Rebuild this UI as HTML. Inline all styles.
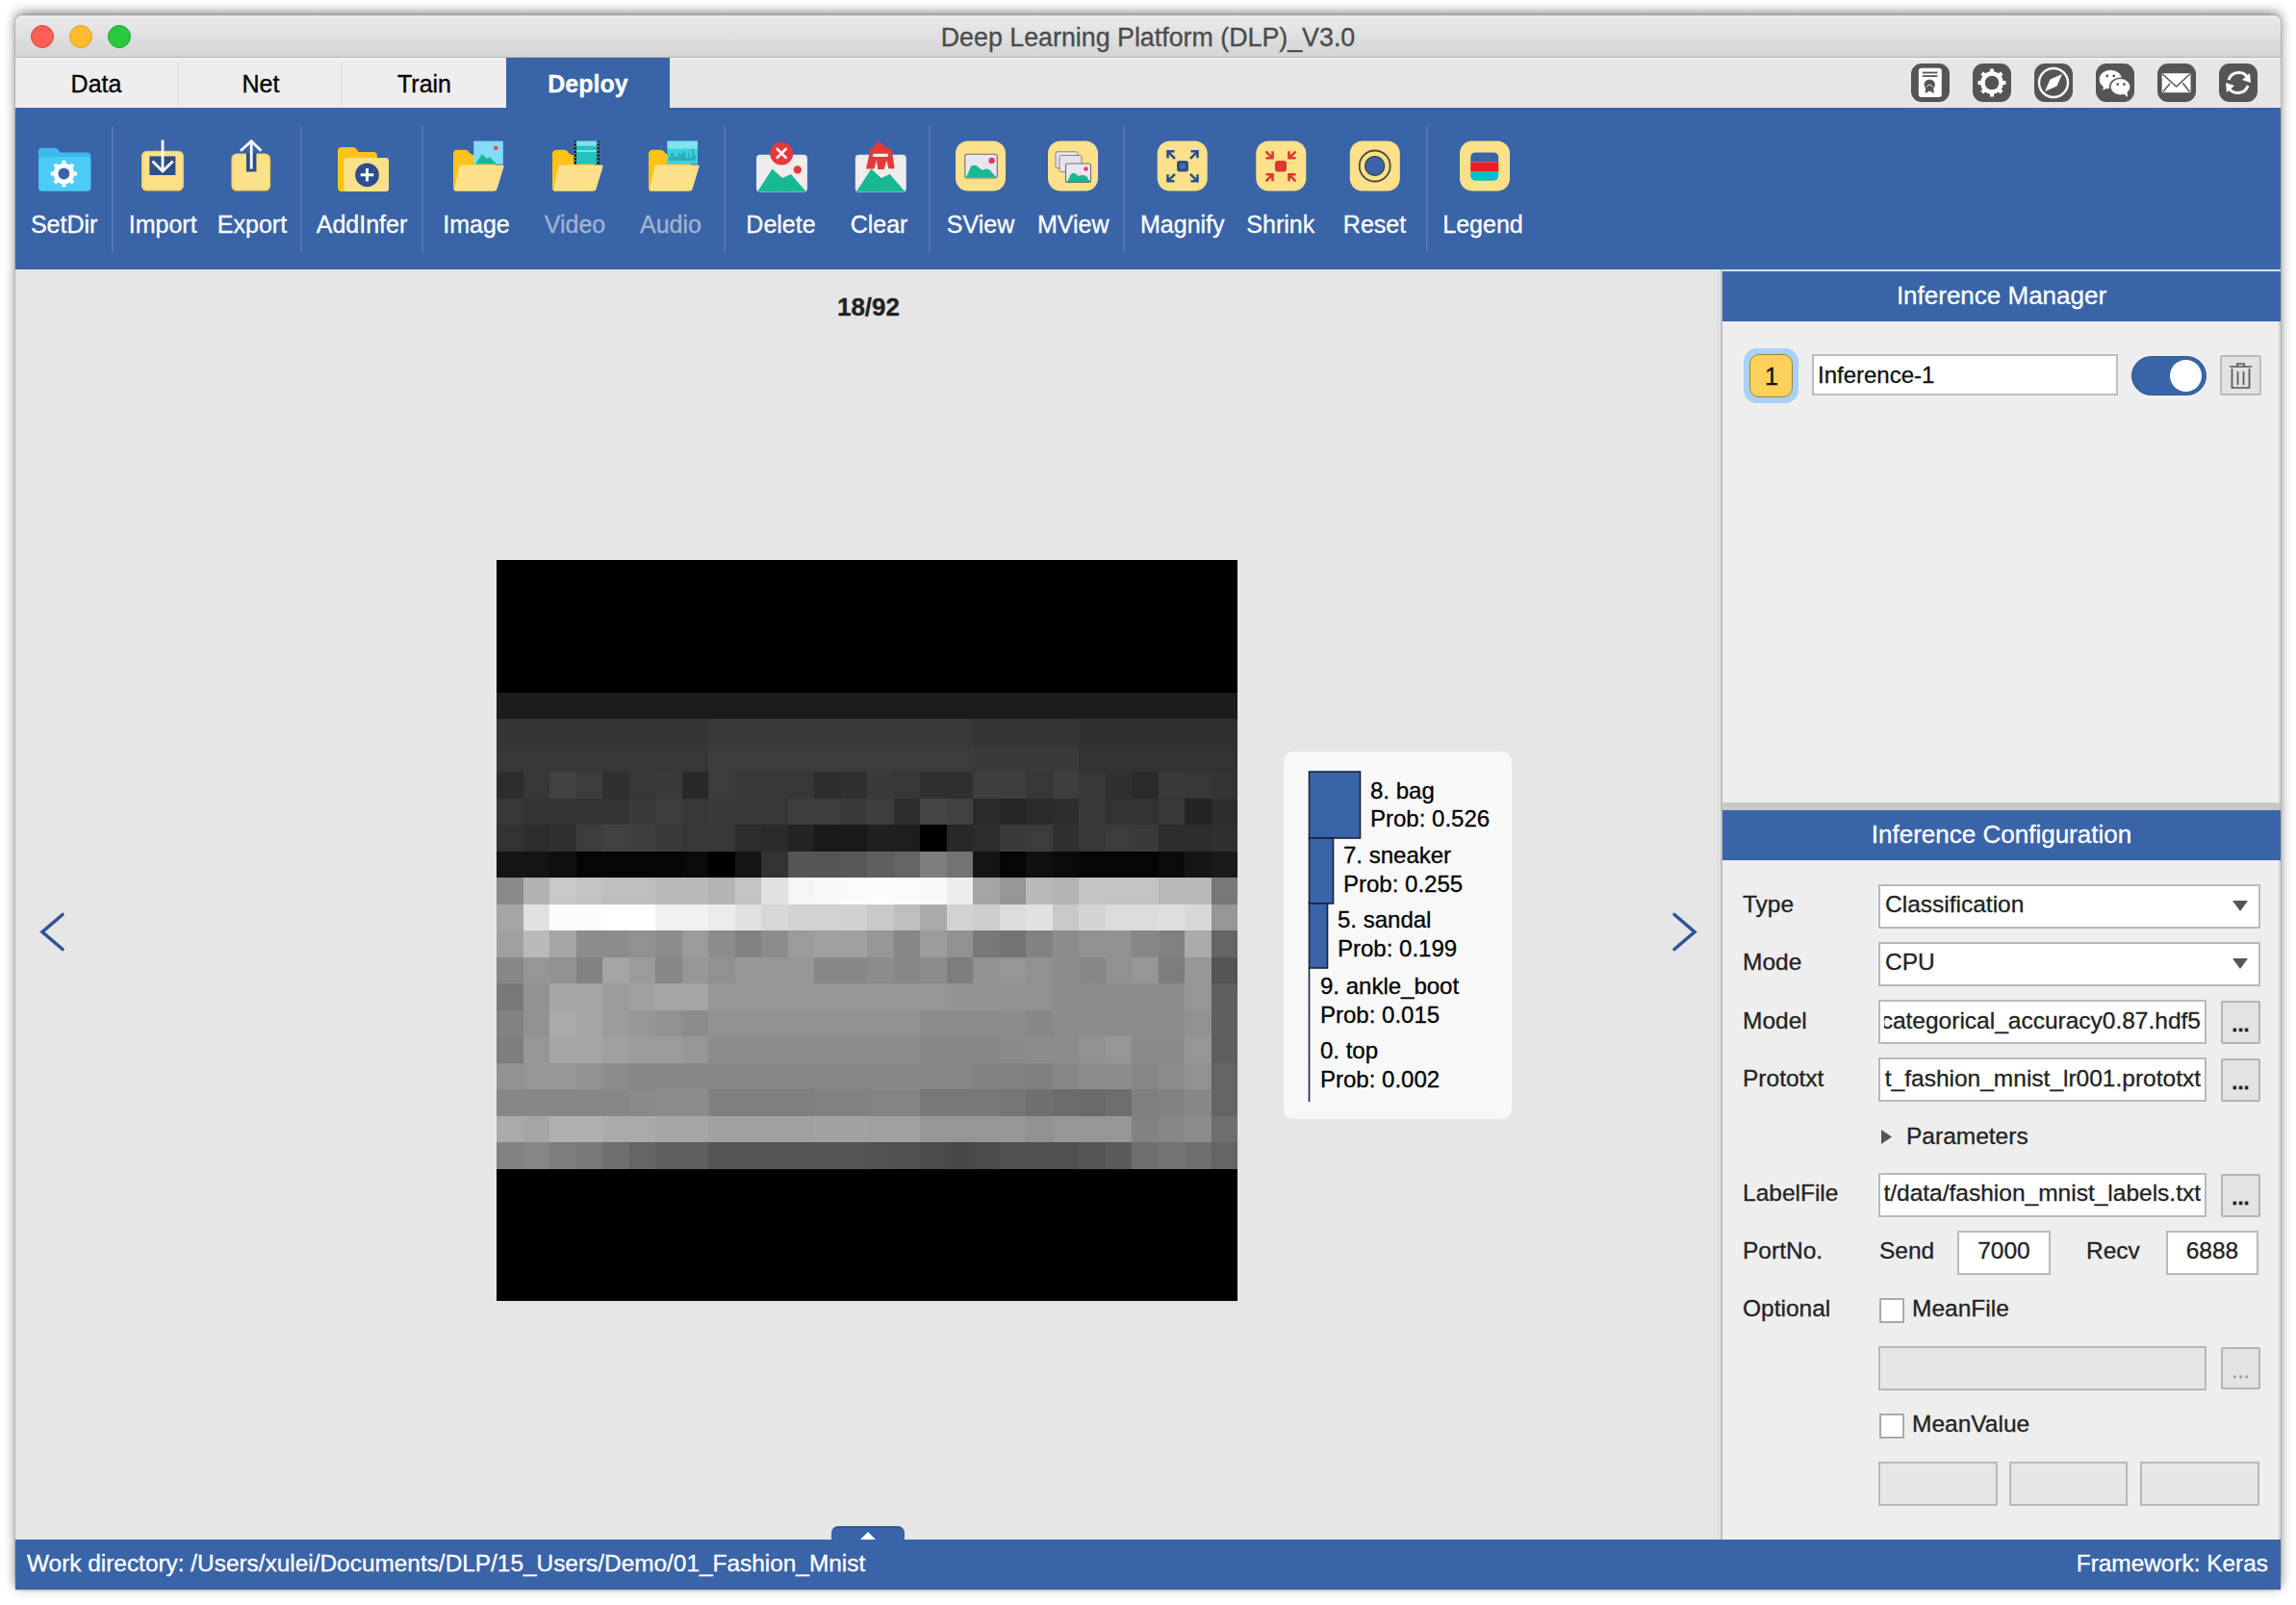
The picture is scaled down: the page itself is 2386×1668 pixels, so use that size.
<!DOCTYPE html><html><head><meta charset="utf-8"><style>
*{margin:0;padding:0;box-sizing:border-box}
html,body{width:2386px;height:1668px;overflow:hidden;background:#ffffff;font-family:"Liberation Sans",sans-serif;position:relative}
.a{position:absolute}
.t{position:absolute;line-height:1;white-space:nowrap;-webkit-text-stroke:0.3px currentColor}
.in{position:absolute;background:#fff;border:2px solid #b9b9b9;overflow:hidden}
.dis{background:#e7e7ea}
.btn{position:absolute;background:#e3e3e3;border:2px solid #b4b4b4;border-radius:2px}
.cb{position:absolute;background:#fff;border:2px solid #a9a9a9;width:26px;height:26px}
</style></head><body><div class="a" style="left:16px;top:16px;width:2354px;height:1636px;background:#e6e6e6;box-shadow:0 -3px 12px rgba(0,0,0,0.5),0 0 2px rgba(0,0,0,0.3);border-radius:7px 7px 0 0"></div><div class="a" style="left:16px;top:16px;width:2354px;height:43px;background:linear-gradient(#ebebeb,#d4d4d4);border-radius:7px 7px 0 0"></div><div class="a" style="left:16px;top:59px;width:2354px;height:1px;background:#b5b5b5"></div><div class="a" style="left:32px;top:26px;width:24px;height:24px;border-radius:50%;background:#fe5f57;border:1px solid #e0443e"></div><div class="a" style="left:72px;top:26px;width:24px;height:24px;border-radius:50%;background:#febc2e;border:1px solid #dea123"></div><div class="a" style="left:112px;top:26px;width:24px;height:24px;border-radius:50%;background:#28c840;border:1px solid #1aab29"></div><div class="t" style="top:26.31px;font-size:26.8px;color:#4b4b4b;font-weight:normal;left:793.00px;width:800px;text-align:center;">Deep Learning Platform (DLP)_V3.0</div><div class="a" style="left:16px;top:60px;width:2354px;height:52px;background:#e6e6e6"></div><div class="a" style="left:16px;top:60px;width:2354px;height:2px;background:#f1f1f1"></div><div class="a" style="left:16px;top:62px;width:510px;height:50px;background:#eeeeee"></div><div class="a" style="left:184px;top:64px;width:2px;height:48px;background:#e3e3e3"></div><div class="a" style="left:354px;top:64px;width:2px;height:48px;background:#e3e3e3"></div><div class="a" style="left:526px;top:60px;width:170px;height:52px;background:#3a64a8"></div><div class="t" style="top:74.84px;font-size:25px;color:#000;font-weight:normal;left:15.00px;width:170px;text-align:center;">Data</div><div class="t" style="top:74.84px;font-size:25px;color:#000;font-weight:normal;left:186.00px;width:170px;text-align:center;">Net</div><div class="t" style="top:74.84px;font-size:25px;color:#000;font-weight:normal;left:356.00px;width:170px;text-align:center;">Train</div><div class="t" style="top:74.84px;font-size:25px;color:#fff;font-weight:bold;left:526.00px;width:170px;text-align:center;">Deploy</div><svg class="a" style="left:0;top:0" width="2386" height="1668"><rect x="1986" y="66" width="40" height="40" rx="11" fill="#555"/><rect x="2050" y="66" width="40" height="40" rx="11" fill="#555"/><rect x="2114" y="66" width="40" height="40" rx="11" fill="#555"/><rect x="2178" y="66" width="40" height="40" rx="11" fill="#555"/><rect x="2242" y="66" width="40" height="40" rx="11" fill="#555"/><rect x="2306" y="66" width="40" height="40" rx="11" fill="#555"/><rect x="1993.8" y="70.7" width="24" height="30.2" rx="3" fill="#fff"/><rect x="1997.8" y="74.6" width="15.6" height="1.8" fill="#555"/><rect x="1997.8" y="78.2" width="15.6" height="1.8" fill="#555"/><path d="M2001.5 90 L2000.5 97 L2005.2 94.5 L2009.9 97 L2008.9 90Z" fill="#555"/><circle cx="2005.2" cy="88" r="5.6" fill="#555"/><path d="M2001.8 90.5 Q2005.2 86 2008.6 90.5" stroke="#fff" stroke-width="0.9" fill="none"/><path d="M2081.41 83.92 L2084.47 84.03 L2084.47 87.97 L2081.41 88.08 L2079.54 92.60 L2081.62 94.84 L2078.84 97.62 L2076.60 95.54 L2072.08 97.41 L2071.97 100.47 L2068.03 100.47 L2067.92 97.41 L2063.40 95.54 L2061.16 97.62 L2058.38 94.84 L2060.46 92.60 L2058.59 88.08 L2055.53 87.97 L2055.53 84.03 L2058.59 83.92 L2060.46 79.40 L2058.38 77.16 L2061.16 74.38 L2063.40 76.46 L2067.92 74.59 L2068.03 71.53 L2071.97 71.53 L2072.08 74.59 L2076.60 76.46 L2078.84 74.38 L2081.62 77.16 L2079.54 79.40Z" fill="#fff"/><circle cx="2070" cy="86" r="11.8" fill="#fff"/><circle cx="2070" cy="86" r="7.3" fill="#555"/><circle cx="2134" cy="86" r="15" fill="none" stroke="#fff" stroke-width="2.4"/><path d="M2125 95 L2130.5 82.5 L2143 77 L2137.5 89.5Z" fill="#fff"/><ellipse cx="2193.3" cy="82.5" rx="11.6" ry="9.8" fill="#fff"/><path d="M2186 88 L2185.5 94 L2191 90.5Z" fill="#fff"/><circle cx="2189.8" cy="78.9" r="1.4" fill="#555"/><circle cx="2196.8" cy="78.9" r="1.4" fill="#555"/><ellipse cx="2203.5" cy="90.3" rx="10.8" ry="9" fill="#fff" stroke="#555" stroke-width="1.6"/><path d="M2207 97.5 L2211 101 L2210.5 95.5Z" fill="#fff"/><circle cx="2200.7" cy="87.6" r="1.4" fill="#555"/><circle cx="2207.4" cy="87.6" r="1.4" fill="#555"/><rect x="2246.7" y="76.2" width="29.8" height="20" fill="#fff"/><path d="M2247 76.8 L2261.6 90 L2276 76.8" fill="none" stroke="#555" stroke-width="1.4"/><path d="M2247.8 95.5 L2255 86.8 M2275.5 95.5 L2268.3 86.3" fill="none" stroke="#555" stroke-width="1.4"/><path d="M2336.5 82 A11 11 0 0 0 2316 83" fill="none" stroke="#fff" stroke-width="3"/><path d="M2315.5 90 A11 11 0 0 0 2336 89" fill="none" stroke="#fff" stroke-width="3"/><path d="M2338 76 L2339 86 L2330 83Z" fill="#fff"/><path d="M2314 96 L2313 86 L2322 89Z" fill="#fff"/></svg><div class="a" style="left:16px;top:112px;width:2354px;height:168px;background:#3a64a8"></div><div class="a" style="left:116px;top:131px;width:2px;height:131px;background:#4f77ba"></div><div class="a" style="left:312px;top:131px;width:2px;height:131px;background:#4f77ba"></div><div class="a" style="left:438px;top:131px;width:2px;height:131px;background:#4f77ba"></div><div class="a" style="left:752px;top:131px;width:2px;height:131px;background:#4f77ba"></div><div class="a" style="left:965px;top:131px;width:2px;height:131px;background:#4f77ba"></div><div class="a" style="left:1167px;top:131px;width:2px;height:131px;background:#4f77ba"></div><div class="a" style="left:1482px;top:131px;width:2px;height:131px;background:#4f77ba"></div><div class="t" style="top:220.84px;font-size:25px;color:#ffffff;font-weight:normal;left:-13.40px;width:160px;text-align:center;">SetDir</div><div class="t" style="top:220.84px;font-size:25px;color:#ffffff;font-weight:normal;left:89.20px;width:160px;text-align:center;">Import</div><div class="t" style="top:220.84px;font-size:25px;color:#ffffff;font-weight:normal;left:182.00px;width:160px;text-align:center;">Export</div><div class="t" style="top:220.84px;font-size:25px;color:#ffffff;font-weight:normal;left:296.00px;width:160px;text-align:center;">AddInfer</div><div class="t" style="top:220.84px;font-size:25px;color:#ffffff;font-weight:normal;left:415.00px;width:160px;text-align:center;">Image</div><div class="t" style="top:220.84px;font-size:25px;color:#a2b4d2;font-weight:normal;left:517.50px;width:160px;text-align:center;">Video</div><div class="t" style="top:220.84px;font-size:25px;color:#a2b4d2;font-weight:normal;left:617.00px;width:160px;text-align:center;">Audio</div><div class="t" style="top:220.84px;font-size:25px;color:#ffffff;font-weight:normal;left:731.50px;width:160px;text-align:center;">Delete</div><div class="t" style="top:220.84px;font-size:25px;color:#ffffff;font-weight:normal;left:833.50px;width:160px;text-align:center;">Clear</div><div class="t" style="top:220.84px;font-size:25px;color:#ffffff;font-weight:normal;left:939.00px;width:160px;text-align:center;">SView</div><div class="t" style="top:220.84px;font-size:25px;color:#ffffff;font-weight:normal;left:1035.20px;width:160px;text-align:center;">MView</div><div class="t" style="top:220.84px;font-size:25px;color:#ffffff;font-weight:normal;left:1148.80px;width:160px;text-align:center;">Magnify</div><div class="t" style="top:220.84px;font-size:25px;color:#ffffff;font-weight:normal;left:1250.80px;width:160px;text-align:center;">Shrink</div><div class="t" style="top:220.84px;font-size:25px;color:#ffffff;font-weight:normal;left:1348.50px;width:160px;text-align:center;">Reset</div><div class="t" style="top:220.84px;font-size:25px;color:#ffffff;font-weight:normal;left:1461.00px;width:160px;text-align:center;">Legend</div><svg class="a" style="left:0;top:0" width="2386" height="1668"><path d="M40 157 Q40 153.8 43.5 153.8 L57 153.8 Q59.5 153.8 61 156 L62.5 158.5 L90.5 158.5 Q94.3 158.5 94.3 162 L94.3 195 Q94.3 198.5 90.5 198.5 L43.5 198.5 Q40 198.5 40 195Z" fill="#3eb8ec"/><rect x="40" y="163" width="54.3" height="35.5" rx="3.5" fill="#4ccbf5"/><path d="M76.81 178.50 L80.06 178.54 L80.06 182.46 L76.81 182.50 L75.18 186.44 L77.44 188.77 L74.67 191.54 L72.34 189.28 L68.40 190.91 L68.36 194.16 L64.44 194.16 L64.40 190.91 L60.46 189.28 L58.13 191.54 L55.36 188.77 L57.62 186.44 L55.99 182.50 L52.74 182.46 L52.74 178.54 L55.99 178.50 L57.62 174.56 L55.36 172.23 L58.13 169.46 L60.46 171.72 L64.40 170.09 L64.44 166.84 L68.36 166.84 L68.40 170.09 L72.34 171.72 L74.67 169.46 L77.44 172.23 L75.18 174.56Z" fill="#fff"/><circle cx="66.4" cy="180.5" r="10.8" fill="#fff"/><circle cx="66.4" cy="180.5" r="5.9" fill="#3a64a8"/><rect x="147.6" y="157.3" width="42.7" height="40.7" rx="5" fill="#fde08a" stroke="#f6cf55" stroke-width="1.2"/><rect x="155.4" y="162.4" width="27" height="19.6" fill="#2c4f8c"/><path d="M169 145.6 L169 177.5 M158.5 167.5 L169 178 L179.7 167.5" fill="none" stroke="#fff" stroke-width="2.8"/><rect x="241" y="160" width="39.5" height="38" rx="5" fill="#fde08a" stroke="#f6cf55" stroke-width="1.2"/><rect x="256" y="159" width="10.4" height="19.5" fill="#2c4f8c"/><path d="M261.2 147 L261.2 175.6 M250 156.8 L261.2 146.6 L271.4 156.8" fill="none" stroke="#fff" stroke-width="2.8"/><path d="M351 157 Q351 153 355 153 L367 153 Q369.5 153 371 155.5 L372.5 158 L388 158 Q392 158 392 162 L392 195 Q392 199 388 199 L355 199 Q351 199 351 195Z" fill="#ffc21a"/><path d="M357.5 167 Q357.5 164 360.5 164 L401 164 Q404 164 404 167 L404 196 Q404 199 401 199 L360.5 199 Q357.5 199 357.5 196Z" fill="#fde08a"/><circle cx="381.5" cy="181.8" r="12.4" fill="#2c4f8c"/><path d="M381.5 175 L381.5 188.6 M374.7 181.8 L388.3 181.8" stroke="#fff" stroke-width="3"/><path d="M471 160 Q471 155.7 476 155.7 L483 155.7 Q486 155.7 488 159 L491 161 L512 161 Q515 161 515 164 L515 196 Q515 198.4 512 198.4 L474 198.4 Q471 198.4 471 195Z" fill="#ffc21a"/><rect x="492.3" y="146.6" width="30.5" height="24" fill="#82dcf7"/><path d="M494 170.4 L501 160 L506 165 L509 163 L516 170.4Z" fill="#17b892"/><circle cx="515.3" cy="153.8" r="2.4" fill="#e05050"/><path d="M479 171.6 L522.5 171.6 Q524 171.6 523.5 173.5 L516.5 196.5 Q516 198.4 514 198.4 L473 198.4 Q471.5 198.4 472 196.5 L477.5 173 Q478 171.6 479 171.6Z" fill="#fde08a"/><path d="M574 160 Q574 155.7 579 155.7 L586 155.7 Q589 155.7 591 159 L594 161 L615 161 Q618 161 618 164 L618 196 Q618 198.4 615 198.4 L577 198.4 Q574 198.4 574 195Z" fill="#ffc21a"/><rect x="596.6" y="146.6" width="26.2" height="24" fill="#22c4bd"/><rect x="599" y="146.6" width="21.4" height="5" fill="#7ee0ee"/><rect x="599" y="156" width="21.4" height="2" fill="#7ee0ee"/><rect x="596.6" y="146.6" width="2.4" height="24" fill="#111"/><rect x="620.4" y="146.6" width="2.4" height="24" fill="#111"/><rect x="597.3" y="148.0" width="1" height="1.3" fill="#fff"/><rect x="621.1" y="148.0" width="1" height="1.3" fill="#fff"/><rect x="597.3" y="151.7" width="1" height="1.3" fill="#fff"/><rect x="621.1" y="151.7" width="1" height="1.3" fill="#fff"/><rect x="597.3" y="155.4" width="1" height="1.3" fill="#fff"/><rect x="621.1" y="155.4" width="1" height="1.3" fill="#fff"/><rect x="597.3" y="159.1" width="1" height="1.3" fill="#fff"/><rect x="621.1" y="159.1" width="1" height="1.3" fill="#fff"/><rect x="597.3" y="162.8" width="1" height="1.3" fill="#fff"/><rect x="621.1" y="162.8" width="1" height="1.3" fill="#fff"/><rect x="597.3" y="166.5" width="1" height="1.3" fill="#fff"/><rect x="621.1" y="166.5" width="1" height="1.3" fill="#fff"/><path d="M582 171.6 L625.5 171.6 Q627 171.6 626.5 173.5 L619.5 196.5 Q619 198.4 617 198.4 L576 198.4 Q574.5 198.4 575 196.5 L580.5 173 Q581 171.6 582 171.6Z" fill="#fde08a"/><path d="M674 160 Q674 155.7 679 155.7 L686 155.7 Q689 155.7 691 159 L694 161 L715 161 Q718 161 718 164 L718 196 Q718 198.4 715 198.4 L677 198.4 Q674 198.4 674 195Z" fill="#ffc21a"/><rect x="693.5" y="146.6" width="31.5" height="24" fill="#3cd0e0"/><rect x="693.5" y="146.6" width="31.5" height="8" fill="#7fe3f2"/><rect x="695.5" y="163" width="0.8" height="4" fill="#1b7f86"/><rect x="697.5" y="159" width="0.8" height="8" fill="#1b7f86"/><rect x="699.5" y="159" width="0.8" height="8" fill="#1b7f86"/><rect x="701.5" y="163" width="0.8" height="4" fill="#1b7f86"/><rect x="703.5" y="162" width="0.8" height="5" fill="#1b7f86"/><rect x="705.5" y="159" width="0.8" height="8" fill="#1b7f86"/><rect x="707.5" y="161" width="0.8" height="6" fill="#1b7f86"/><rect x="709.5" y="157" width="0.8" height="10" fill="#1b7f86"/><rect x="711.5" y="159" width="0.8" height="8" fill="#1b7f86"/><rect x="713.5" y="164" width="0.8" height="3" fill="#1b7f86"/><rect x="715.5" y="159" width="0.8" height="8" fill="#1b7f86"/><rect x="717.5" y="164" width="0.8" height="3" fill="#1b7f86"/><rect x="719.5" y="155" width="0.8" height="12" fill="#1b7f86"/><rect x="721.5" y="161" width="0.8" height="6" fill="#1b7f86"/><path d="M682 171.6 L725.5 171.6 Q727 171.6 726.5 173.5 L719.5 196.5 Q719 198.4 717 198.4 L676 198.4 Q674.5 198.4 675 196.5 L680.5 173 Q681 171.6 682 171.6Z" fill="#fde08a"/><rect x="786" y="160.7" width="53" height="39" rx="4" fill="#e9e9f2"/><rect x="789" y="163.7" width="47" height="33" rx="2" fill="#f2ecec"/><path d="M787 199.6 L802.5 175.5 L813 185 L822 181 L838 199.6Z" fill="#17b892"/><circle cx="828.8" cy="176.4" r="4.2" fill="#e5393b"/><circle cx="812.2" cy="159.4" r="12" fill="#e5393b"/><path d="M807 154.2 L817.4 164.6 M817.4 154.2 L807 164.6" stroke="#fff" stroke-width="2.6"/><rect x="888.8" y="160.7" width="53" height="39" rx="4" fill="#e9e9f2"/><rect x="891.8" y="163.7" width="47" height="33" rx="2" fill="#f2ecec"/><path d="M889.8 199.6 L905.3 175.5 L915.8 185 L924.8 181 L940.8 199.6Z" fill="#17b892"/><path d="M913.4 146.5 L919.5 152.5 Q926.5 153.5 927.5 159.5 L929.5 175.2 L923.5 175.2 L921.2 166.5 L918.8 176 L912.3 176 L910.8 166.5 L908.5 175.5 L900 175.5 L903.5 159.5 Q904.5 153.5 907.5 152.5Z" fill="#e5393b"/><rect x="907" y="159.8" width="16" height="3.2" rx="1.5" fill="#f8eeee"/><rect x="993" y="146.5" width="52" height="52" rx="13" fill="#fde08a"/><rect x="1089" y="146.5" width="52" height="52" rx="13" fill="#fde08a"/><rect x="1202.7" y="146.5" width="52" height="52" rx="13" fill="#fde08a"/><rect x="1305.3" y="146.5" width="52" height="52" rx="13" fill="#fde08a"/><rect x="1402.8" y="146.5" width="52" height="52" rx="13" fill="#fde08a"/><rect x="1517" y="146.5" width="52" height="52" rx="13" fill="#fde08a"/><rect x="1002.8" y="160.3" width="33.5" height="24.7" rx="2.5" fill="#e8e6ee" stroke="#6e6e6e" stroke-width="1.1"/><path d="M1004 184.5 L1009 173 Q1013 170 1017 174 L1021 177 Q1025 174 1029 177 L1035.5 184.5Z" fill="#17b892"/><circle cx="1030.6" cy="166.9" r="3.2" fill="#e04060"/><rect x="1097" y="157.7" width="23" height="17" rx="2" fill="#e4e4ea" stroke="#888" stroke-width="1"/><rect x="1101" y="161.5" width="23" height="17" rx="2" fill="#e4e4ea" stroke="#888" stroke-width="1"/><rect x="1107.5" y="170" width="26" height="19.5" rx="2" fill="#ece6ee" stroke="#6e6e6e" stroke-width="1.1"/><path d="M1109 189 L1113 181 Q1116 178.5 1119 181.5 L1121 183 Q1125 181 1129 183 L1133 189Z" fill="#17b892"/><circle cx="1128.5" cy="175.5" r="2.2" fill="#e04060"/><rect x="1223" y="167" width="12" height="11.5" rx="3" fill="#2c4f8c"/><rect x="1226" y="170" width="6" height="5.5" rx="1.5" fill="#4a6aa0"/><path d="M1221 164.8 L1213.5 157.3 M1213.5 157.3 L1213.5 157.3 M1213.5 164.3 L1213.5 157.3 L1220.5 157.3 M1221 180.8 L1213.5 188.3 M1213.5 188.3 L1213.5 188.3 M1213.5 181.3 L1213.5 188.3 L1220.5 188.3 M1237 164.8 L1244.5 157.3 M1244.5 157.3 L1244.5 157.3 M1244.5 164.3 L1244.5 157.3 L1237.5 157.3 M1237 180.8 L1244.5 188.3 M1244.5 188.3 L1244.5 188.3 M1244.5 181.3 L1244.5 188.3 L1237.5 188.3" fill="none" stroke="#2c4f8c" stroke-width="2.6"/><rect x="1325" y="167" width="12" height="11.5" rx="3" fill="#d93a30"/><path d="M1315.5 157.3 L1322.5 164.3 M1322.5 157.3 L1322.5 164.3 L1315.5 164.3 M1315.5 188.3 L1322.5 181.3 M1322.5 188.3 L1322.5 181.3 L1315.5 181.3 M1346.5 157.3 L1339.5 164.3 M1339.5 157.3 L1339.5 164.3 L1346.5 164.3 M1346.5 188.3 L1339.5 181.3 M1339.5 188.3 L1339.5 181.3 L1346.5 181.3" fill="none" stroke="#d93a30" stroke-width="2.6"/><circle cx="1428.7" cy="172.5" r="16" fill="none" stroke="#4a4a3a" stroke-width="1.8"/><circle cx="1428.7" cy="172.5" r="10" fill="#3a64a8" stroke="#3a3a50" stroke-width="1.2"/><clipPath id="lgc"><rect x="1528.2" y="158.4" width="29" height="29.4" rx="5"/></clipPath><g clip-path="url(#lgc)"><rect x="1528" y="158" width="30" height="10.5" fill="#3a64a8"/><rect x="1528" y="168.5" width="30" height="10" fill="#ee1c24"/><rect x="1528" y="178.5" width="30" height="10" fill="#00c0c8"/></g></svg><div class="a" style="left:16px;top:280px;width:1773px;height:1320px;background:#e6e6e6"></div><div class="t" style="top:305.99px;font-size:26px;color:#222;font-weight:bold;left:802.50px;width:200px;text-align:center;">18/92</div><div class="a" style="left:516px;top:582px;width:770px;height:770px;overflow:hidden"><svg width="770" height="770" viewBox="0 0 28 28" preserveAspectRatio="none" shape-rendering="crispEdges" style="position:absolute;left:0;top:0"><rect width="28" height="28" fill="#000"/><rect x="0" y="5" width="28" height="1" fill="#1c1c1c"/><rect x="0" y="6" width="8" height="1" fill="#343434"/><rect x="8" y="6" width="10" height="1" fill="#383838"/><rect x="18" y="6" width="4" height="1" fill="#343434"/><rect x="22" y="6" width="6" height="1" fill="#303030"/><rect x="0" y="7" width="8" height="1" fill="#373737"/><rect x="8" y="7" width="10" height="1" fill="#3c3c3c"/><rect x="18" y="7" width="4" height="1" fill="#3a3a3a"/><rect x="22" y="7" width="6" height="1" fill="#323232"/><rect x="0" y="8" width="1" height="1" fill="#2d2d2d"/><rect x="1" y="8" width="1" height="1" fill="#373737"/><rect x="2" y="8" width="1" height="1" fill="#414141"/><rect x="3" y="8" width="1" height="1" fill="#3c3c3c"/><rect x="4" y="8" width="1" height="1" fill="#303030"/><rect x="5" y="8" width="1" height="1" fill="#373737"/><rect x="6" y="8" width="1" height="1" fill="#3a3a3a"/><rect x="7" y="8" width="1" height="1" fill="#282828"/><rect x="8" y="8" width="1" height="1" fill="#3c3c3c"/><rect x="9" y="8" width="3" height="1" fill="#373737"/><rect x="12" y="8" width="1" height="1" fill="#2d2d2d"/><rect x="13" y="8" width="1" height="1" fill="#303030"/><rect x="14" y="8" width="1" height="1" fill="#3a3a3a"/><rect x="15" y="8" width="1" height="1" fill="#373737"/><rect x="16" y="8" width="2" height="1" fill="#303030"/><rect x="18" y="8" width="2" height="1" fill="#3e3e3e"/><rect x="20" y="8" width="1" height="1" fill="#373737"/><rect x="21" y="8" width="1" height="1" fill="#3e3e3e"/><rect x="22" y="8" width="1" height="1" fill="#373737"/><rect x="23" y="8" width="1" height="1" fill="#303030"/><rect x="24" y="8" width="1" height="1" fill="#2a2a2a"/><rect x="25" y="8" width="1" height="1" fill="#3a3a3a"/><rect x="26" y="8" width="1" height="1" fill="#373737"/><rect x="27" y="8" width="1" height="1" fill="#343434"/><rect x="0" y="9" width="1" height="1" fill="#373737"/><rect x="1" y="9" width="3" height="1" fill="#323232"/><rect x="4" y="9" width="1" height="1" fill="#343434"/><rect x="5" y="9" width="1" height="1" fill="#3a3a3a"/><rect x="6" y="9" width="1" height="1" fill="#3c3c3c"/><rect x="7" y="9" width="1" height="1" fill="#373737"/><rect x="8" y="9" width="1" height="1" fill="#3a3a3a"/><rect x="9" y="9" width="2" height="1" fill="#373737"/><rect x="11" y="9" width="1" height="1" fill="#3e3e3e"/><rect x="12" y="9" width="1" height="1" fill="#3c3c3c"/><rect x="13" y="9" width="1" height="1" fill="#3a3a3a"/><rect x="14" y="9" width="1" height="1" fill="#3e3e3e"/><rect x="15" y="9" width="1" height="1" fill="#2d2d2d"/><rect x="16" y="9" width="1" height="1" fill="#444444"/><rect x="17" y="9" width="1" height="1" fill="#414141"/><rect x="18" y="9" width="1" height="1" fill="#2a2a2a"/><rect x="19" y="9" width="1" height="1" fill="#262626"/><rect x="20" y="9" width="1" height="1" fill="#2a2a2a"/><rect x="21" y="9" width="1" height="1" fill="#2d2d2d"/><rect x="22" y="9" width="1" height="1" fill="#373737"/><rect x="23" y="9" width="2" height="1" fill="#323232"/><rect x="25" y="9" width="1" height="1" fill="#373737"/><rect x="26" y="9" width="1" height="1" fill="#232323"/><rect x="27" y="9" width="1" height="1" fill="#2d2d2d"/><rect x="0" y="10" width="1" height="1" fill="#323232"/><rect x="1" y="10" width="1" height="1" fill="#2d2d2d"/><rect x="2" y="10" width="1" height="1" fill="#303030"/><rect x="3" y="10" width="1" height="1" fill="#3c3c3c"/><rect x="4" y="10" width="1" height="1" fill="#414141"/><rect x="5" y="10" width="1" height="1" fill="#3e3e3e"/><rect x="6" y="10" width="1" height="1" fill="#3a3a3a"/><rect x="7" y="10" width="2" height="1" fill="#373737"/><rect x="9" y="10" width="1" height="1" fill="#2d2d2d"/><rect x="10" y="10" width="1" height="1" fill="#2a2a2a"/><rect x="11" y="10" width="1" height="1" fill="#232323"/><rect x="12" y="10" width="2" height="1" fill="#191919"/><rect x="14" y="10" width="1" height="1" fill="#202020"/><rect x="15" y="10" width="1" height="1" fill="#1e1e1e"/><rect x="17" y="10" width="1" height="1" fill="#282828"/><rect x="18" y="10" width="1" height="1" fill="#2d2d2d"/><rect x="19" y="10" width="1" height="1" fill="#3a3a3a"/><rect x="20" y="10" width="1" height="1" fill="#3c3c3c"/><rect x="21" y="10" width="1" height="1" fill="#303030"/><rect x="22" y="10" width="1" height="1" fill="#373737"/><rect x="23" y="10" width="1" height="1" fill="#3c3c3c"/><rect x="24" y="10" width="1" height="1" fill="#3a3a3a"/><rect x="25" y="10" width="2" height="1" fill="#2d2d2d"/><rect x="27" y="10" width="1" height="1" fill="#303030"/><rect x="0" y="11" width="2" height="1" fill="#141414"/><rect x="2" y="11" width="1" height="1" fill="#0f0f0f"/><rect x="3" y="11" width="4" height="1" fill="#050505"/><rect x="7" y="11" width="1" height="1" fill="#0a0a0a"/><rect x="9" y="11" width="1" height="1" fill="#141414"/><rect x="10" y="11" width="1" height="1" fill="#323232"/><rect x="11" y="11" width="2" height="1" fill="#555555"/><rect x="13" y="11" width="1" height="1" fill="#585858"/><rect x="14" y="11" width="1" height="1" fill="#5f5f5f"/><rect x="15" y="11" width="1" height="1" fill="#646464"/><rect x="16" y="11" width="1" height="1" fill="#7d7d7d"/><rect x="17" y="11" width="1" height="1" fill="#737373"/><rect x="18" y="11" width="1" height="1" fill="#141414"/><rect x="19" y="11" width="1" height="1" fill="#050505"/><rect x="20" y="11" width="1" height="1" fill="#0f0f0f"/><rect x="21" y="11" width="1" height="1" fill="#0a0a0a"/><rect x="22" y="11" width="3" height="1" fill="#050505"/><rect x="25" y="11" width="1" height="1" fill="#0a0a0a"/><rect x="26" y="11" width="1" height="1" fill="#141414"/><rect x="27" y="11" width="1" height="1" fill="#191919"/><rect x="0" y="12" width="1" height="1" fill="#8a8a8a"/><rect x="1" y="12" width="1" height="1" fill="#b2b2b2"/><rect x="2" y="12" width="1" height="1" fill="#c8c8c8"/><rect x="3" y="12" width="1" height="1" fill="#c3c3c3"/><rect x="4" y="12" width="2" height="1" fill="#bebebe"/><rect x="6" y="12" width="2" height="1" fill="#b9b9b9"/><rect x="8" y="12" width="1" height="1" fill="#b4b4b4"/><rect x="9" y="12" width="1" height="1" fill="#c3c3c3"/><rect x="10" y="12" width="1" height="1" fill="#e1e1e1"/><rect x="11" y="12" width="1" height="1" fill="#f5f5f5"/><rect x="12" y="12" width="1" height="1" fill="#f8f8f8"/><rect x="13" y="12" width="1" height="1" fill="#fafafa"/><rect x="14" y="12" width="1" height="1" fill="#fcfcfc"/><rect x="15" y="12" width="1" height="1" fill="#fafafa"/><rect x="16" y="12" width="1" height="1" fill="#f8f8f8"/><rect x="17" y="12" width="1" height="1" fill="#eeeeee"/><rect x="18" y="12" width="1" height="1" fill="#a5a5a5"/><rect x="19" y="12" width="1" height="1" fill="#969696"/><rect x="20" y="12" width="1" height="1" fill="#b9b9b9"/><rect x="21" y="12" width="1" height="1" fill="#b4b4b4"/><rect x="22" y="12" width="3" height="1" fill="#c3c3c3"/><rect x="25" y="12" width="2" height="1" fill="#b9b9b9"/><rect x="27" y="12" width="1" height="1" fill="#787878"/><rect x="0" y="13" width="1" height="1" fill="#a5a5a5"/><rect x="1" y="13" width="1" height="1" fill="#e1e1e1"/><rect x="2" y="13" width="2" height="1" fill="#fcfcfc"/><rect x="4" y="13" width="2" height="1" fill="#ffffff"/><rect x="6" y="13" width="2" height="1" fill="#f0f0f0"/><rect x="8" y="13" width="1" height="1" fill="#ebebeb"/><rect x="9" y="13" width="1" height="1" fill="#e1e1e1"/><rect x="10" y="13" width="1" height="1" fill="#d7d7d7"/><rect x="11" y="13" width="2" height="1" fill="#d2d2d2"/><rect x="13" y="13" width="1" height="1" fill="#d0d0d0"/><rect x="14" y="13" width="1" height="1" fill="#c8c8c8"/><rect x="15" y="13" width="1" height="1" fill="#bebebe"/><rect x="16" y="13" width="1" height="1" fill="#aaaaaa"/><rect x="17" y="13" width="1" height="1" fill="#d2d2d2"/><rect x="18" y="13" width="1" height="1" fill="#cdcdcd"/><rect x="19" y="13" width="1" height="1" fill="#dcdcdc"/><rect x="20" y="13" width="1" height="1" fill="#e1e1e1"/><rect x="21" y="13" width="1" height="1" fill="#c8c8c8"/><rect x="22" y="13" width="1" height="1" fill="#d4d4d4"/><rect x="23" y="13" width="2" height="1" fill="#dcdcdc"/><rect x="25" y="13" width="1" height="1" fill="#dedede"/><rect x="26" y="13" width="1" height="1" fill="#d7d7d7"/><rect x="27" y="13" width="1" height="1" fill="#969696"/><rect x="0" y="14" width="1" height="1" fill="#a0a0a0"/><rect x="1" y="14" width="1" height="1" fill="#b9b9b9"/><rect x="2" y="14" width="1" height="1" fill="#a5a5a5"/><rect x="3" y="14" width="2" height="1" fill="#8c8c8c"/><rect x="5" y="14" width="1" height="1" fill="#919191"/><rect x="6" y="14" width="1" height="1" fill="#8c8c8c"/><rect x="7" y="14" width="1" height="1" fill="#9b9b9b"/><rect x="8" y="14" width="1" height="1" fill="#8c8c8c"/><rect x="9" y="14" width="1" height="1" fill="#828282"/><rect x="10" y="14" width="1" height="1" fill="#8c8c8c"/><rect x="11" y="14" width="1" height="1" fill="#9b9b9b"/><rect x="12" y="14" width="2" height="1" fill="#a0a0a0"/><rect x="14" y="14" width="1" height="1" fill="#969696"/><rect x="15" y="14" width="1" height="1" fill="#878787"/><rect x="16" y="14" width="1" height="1" fill="#9b9b9b"/><rect x="17" y="14" width="1" height="1" fill="#919191"/><rect x="18" y="14" width="1" height="1" fill="#787878"/><rect x="19" y="14" width="1" height="1" fill="#737373"/><rect x="20" y="14" width="1" height="1" fill="#828282"/><rect x="21" y="14" width="1" height="1" fill="#8c8c8c"/><rect x="22" y="14" width="2" height="1" fill="#919191"/><rect x="24" y="14" width="1" height="1" fill="#878787"/><rect x="25" y="14" width="1" height="1" fill="#828282"/><rect x="26" y="14" width="1" height="1" fill="#aaaaaa"/><rect x="27" y="14" width="1" height="1" fill="#646464"/><rect x="0" y="15" width="1" height="1" fill="#878787"/><rect x="1" y="15" width="1" height="1" fill="#969696"/><rect x="2" y="15" width="1" height="1" fill="#919191"/><rect x="3" y="15" width="1" height="1" fill="#828282"/><rect x="4" y="15" width="1" height="1" fill="#a5a5a5"/><rect x="5" y="15" width="1" height="1" fill="#9b9b9b"/><rect x="6" y="15" width="1" height="1" fill="#878787"/><rect x="7" y="15" width="1" height="1" fill="#969696"/><rect x="8" y="15" width="1" height="1" fill="#919191"/><rect x="9" y="15" width="3" height="1" fill="#969696"/><rect x="12" y="15" width="2" height="1" fill="#878787"/><rect x="14" y="15" width="1" height="1" fill="#8c8c8c"/><rect x="15" y="15" width="1" height="1" fill="#878787"/><rect x="16" y="15" width="1" height="1" fill="#8c8c8c"/><rect x="17" y="15" width="1" height="1" fill="#7d7d7d"/><rect x="18" y="15" width="1" height="1" fill="#919191"/><rect x="19" y="15" width="1" height="1" fill="#969696"/><rect x="20" y="15" width="1" height="1" fill="#919191"/><rect x="21" y="15" width="1" height="1" fill="#8c8c8c"/><rect x="22" y="15" width="1" height="1" fill="#878787"/><rect x="23" y="15" width="1" height="1" fill="#919191"/><rect x="24" y="15" width="1" height="1" fill="#969696"/><rect x="25" y="15" width="1" height="1" fill="#7d7d7d"/><rect x="26" y="15" width="1" height="1" fill="#969696"/><rect x="27" y="15" width="1" height="1" fill="#555555"/><rect x="0" y="16" width="1" height="1" fill="#787878"/><rect x="1" y="16" width="1" height="1" fill="#919191"/><rect x="2" y="16" width="2" height="1" fill="#a5a5a5"/><rect x="4" y="16" width="1" height="1" fill="#9b9b9b"/><rect x="5" y="16" width="1" height="1" fill="#a0a0a0"/><rect x="6" y="16" width="2" height="1" fill="#a5a5a5"/><rect x="8" y="16" width="9" height="1" fill="#969696"/><rect x="17" y="16" width="2" height="1" fill="#949494"/><rect x="19" y="16" width="2" height="1" fill="#919191"/><rect x="21" y="16" width="5" height="1" fill="#8c8c8c"/><rect x="26" y="16" width="1" height="1" fill="#969696"/><rect x="27" y="16" width="1" height="1" fill="#5f5f5f"/><rect x="0" y="17" width="1" height="1" fill="#828282"/><rect x="1" y="17" width="1" height="1" fill="#919191"/><rect x="2" y="17" width="1" height="1" fill="#aaaaaa"/><rect x="3" y="17" width="1" height="1" fill="#a5a5a5"/><rect x="4" y="17" width="1" height="1" fill="#9b9b9b"/><rect x="5" y="17" width="1" height="1" fill="#969696"/><rect x="6" y="17" width="1" height="1" fill="#919191"/><rect x="7" y="17" width="1" height="1" fill="#8c8c8c"/><rect x="8" y="17" width="8" height="1" fill="#919191"/><rect x="16" y="17" width="4" height="1" fill="#8c8c8c"/><rect x="20" y="17" width="1" height="1" fill="#878787"/><rect x="21" y="17" width="5" height="1" fill="#8c8c8c"/><rect x="26" y="17" width="1" height="1" fill="#919191"/><rect x="27" y="17" width="1" height="1" fill="#5f5f5f"/><rect x="0" y="18" width="1" height="1" fill="#7d7d7d"/><rect x="1" y="18" width="1" height="1" fill="#969696"/><rect x="2" y="18" width="2" height="1" fill="#a5a5a5"/><rect x="4" y="18" width="1" height="1" fill="#a0a0a0"/><rect x="5" y="18" width="2" height="1" fill="#9b9b9b"/><rect x="7" y="18" width="1" height="1" fill="#969696"/><rect x="8" y="18" width="8" height="1" fill="#8c8c8c"/><rect x="16" y="18" width="3" height="1" fill="#878787"/><rect x="19" y="18" width="1" height="1" fill="#8a8a8a"/><rect x="20" y="18" width="2" height="1" fill="#8c8c8c"/><rect x="22" y="18" width="1" height="1" fill="#919191"/><rect x="23" y="18" width="1" height="1" fill="#969696"/><rect x="24" y="18" width="2" height="1" fill="#8a8a8a"/><rect x="26" y="18" width="1" height="1" fill="#969696"/><rect x="27" y="18" width="1" height="1" fill="#5f5f5f"/><rect x="0" y="19" width="1" height="1" fill="#919191"/><rect x="1" y="19" width="2" height="1" fill="#969696"/><rect x="3" y="19" width="1" height="1" fill="#919191"/><rect x="4" y="19" width="1" height="1" fill="#8c8c8c"/><rect x="5" y="19" width="13" height="1" fill="#878787"/><rect x="18" y="19" width="2" height="1" fill="#828282"/><rect x="20" y="19" width="1" height="1" fill="#808080"/><rect x="21" y="19" width="1" height="1" fill="#878787"/><rect x="22" y="19" width="2" height="1" fill="#8c8c8c"/><rect x="24" y="19" width="1" height="1" fill="#878787"/><rect x="25" y="19" width="1" height="1" fill="#8c8c8c"/><rect x="26" y="19" width="1" height="1" fill="#919191"/><rect x="27" y="19" width="1" height="1" fill="#646464"/><rect x="0" y="20" width="5" height="1" fill="#878787"/><rect x="5" y="20" width="1" height="1" fill="#8a8a8a"/><rect x="6" y="20" width="2" height="1" fill="#8c8c8c"/><rect x="8" y="20" width="4" height="1" fill="#808080"/><rect x="12" y="20" width="2" height="1" fill="#828282"/><rect x="14" y="20" width="2" height="1" fill="#848484"/><rect x="16" y="20" width="3" height="1" fill="#787878"/><rect x="19" y="20" width="1" height="1" fill="#767676"/><rect x="20" y="20" width="1" height="1" fill="#707070"/><rect x="21" y="20" width="1" height="1" fill="#6c6c6c"/><rect x="22" y="20" width="1" height="1" fill="#696969"/><rect x="23" y="20" width="1" height="1" fill="#6e6e6e"/><rect x="24" y="20" width="1" height="1" fill="#808080"/><rect x="25" y="20" width="1" height="1" fill="#828282"/><rect x="26" y="20" width="1" height="1" fill="#878787"/><rect x="27" y="20" width="1" height="1" fill="#646464"/><rect x="0" y="21" width="1" height="1" fill="#aaaaaa"/><rect x="1" y="21" width="1" height="1" fill="#a5a5a5"/><rect x="2" y="21" width="2" height="1" fill="#afafaf"/><rect x="4" y="21" width="2" height="1" fill="#aaaaaa"/><rect x="6" y="21" width="2" height="1" fill="#a5a5a5"/><rect x="8" y="21" width="4" height="1" fill="#a0a0a0"/><rect x="12" y="21" width="2" height="1" fill="#a2a2a2"/><rect x="14" y="21" width="2" height="1" fill="#a0a0a0"/><rect x="16" y="21" width="4" height="1" fill="#969696"/><rect x="20" y="21" width="1" height="1" fill="#919191"/><rect x="21" y="21" width="3" height="1" fill="#969696"/><rect x="24" y="21" width="1" height="1" fill="#828282"/><rect x="25" y="21" width="1" height="1" fill="#878787"/><rect x="26" y="21" width="1" height="1" fill="#8c8c8c"/><rect x="27" y="21" width="1" height="1" fill="#6e6e6e"/><rect x="0" y="22" width="1" height="1" fill="#828282"/><rect x="1" y="22" width="1" height="1" fill="#878787"/><rect x="2" y="22" width="1" height="1" fill="#7d7d7d"/><rect x="3" y="22" width="1" height="1" fill="#787878"/><rect x="4" y="22" width="1" height="1" fill="#6e6e6e"/><rect x="5" y="22" width="1" height="1" fill="#646464"/><rect x="6" y="22" width="2" height="1" fill="#5f5f5f"/><rect x="8" y="22" width="6" height="1" fill="#555555"/><rect x="14" y="22" width="1" height="1" fill="#525252"/><rect x="15" y="22" width="1" height="1" fill="#505050"/><rect x="16" y="22" width="1" height="1" fill="#4b4b4b"/><rect x="17" y="22" width="1" height="1" fill="#484848"/><rect x="18" y="22" width="1" height="1" fill="#4b4b4b"/><rect x="19" y="22" width="3" height="1" fill="#505050"/><rect x="22" y="22" width="1" height="1" fill="#555555"/><rect x="23" y="22" width="1" height="1" fill="#5a5a5a"/><rect x="24" y="22" width="1" height="1" fill="#6e6e6e"/><rect x="25" y="22" width="1" height="1" fill="#737373"/><rect x="26" y="22" width="1" height="1" fill="#6e6e6e"/><rect x="27" y="22" width="1" height="1" fill="#646464"/></svg></div><svg class="a" style="left:0;top:0" width="2386" height="1668"><path d="M65 950.5 L44 968.5 L65 986.5" fill="none" stroke="#2f5594" stroke-width="3.6" stroke-linecap="round" stroke-linejoin="miter"/><path d="M1740 950.5 L1761 968.5 L1740 986.5" fill="none" stroke="#2f5594" stroke-width="3.6" stroke-linecap="round"/></svg><div class="a" style="left:1334px;top:781px;width:237px;height:382px;background:#f8f8f8;border-radius:10px"></div><svg class="a" style="left:0;top:0" width="2386" height="1668"><rect x="1360.5" y="802" width="53" height="69" fill="#3a64a8" stroke="#16233a" stroke-width="1.6"/><rect x="1360.5" y="871" width="25" height="68" fill="#3a64a8" stroke="#16233a" stroke-width="1.6"/><rect x="1360.5" y="939" width="19" height="67" fill="#3a64a8" stroke="#16233a" stroke-width="1.6"/><line x1="1360.5" y1="1006" x2="1360.5" y2="1145" stroke="#16233a" stroke-width="1.6"/></svg><div class="t" style="top:809.68px;font-size:24px;color:#000;font-weight:normal;left:1424px;">8. bag</div><div class="t" style="top:838.68px;font-size:24px;color:#000;font-weight:normal;left:1424px;">Prob: 0.526</div><div class="t" style="top:876.68px;font-size:24px;color:#000;font-weight:normal;left:1396px;">7. sneaker</div><div class="t" style="top:906.68px;font-size:24px;color:#000;font-weight:normal;left:1396px;">Prob: 0.255</div><div class="t" style="top:944.18px;font-size:24px;color:#000;font-weight:normal;left:1390px;">5. sandal</div><div class="t" style="top:973.68px;font-size:24px;color:#000;font-weight:normal;left:1390px;">Prob: 0.199</div><div class="t" style="top:1012.68px;font-size:24px;color:#000;font-weight:normal;left:1372px;">9. ankle_boot</div><div class="t" style="top:1042.68px;font-size:24px;color:#000;font-weight:normal;left:1372px;">Prob: 0.015</div><div class="t" style="top:1079.68px;font-size:24px;color:#000;font-weight:normal;left:1372px;">0. top</div><div class="t" style="top:1109.68px;font-size:24px;color:#000;font-weight:normal;left:1372px;">Prob: 0.002</div><div class="a" style="left:864px;top:1586px;width:76px;height:16px;background:#3a64a8;border-radius:7px 7px 0 0;border-top:2px solid #2f5590"></div><svg class="a" style="left:0;top:0" width="2386" height="1668"><path d="M894 1600 L902 1592 L910 1600 Z" fill="#fff"/></svg><div class="a" style="left:1785px;top:280px;width:1px;height:1320px;background:#d6d6d6"></div><div class="a" style="left:1788px;top:280px;width:2px;height:1320px;background:#bdbdbd"></div><div class="a" style="left:1790px;top:280px;width:580px;height:1320px;background:#eeeeee"></div><div class="a" style="left:1790px;top:280px;width:580px;height:2px;background:#d6e2f2"></div><div class="a" style="left:1790px;top:282px;width:580px;height:52px;background:#3a64a8"></div><div class="t" style="top:293.99px;font-size:26px;color:#fff;font-weight:normal;left:1830.00px;width:500px;text-align:center;">Inference Manager</div><div class="a" style="left:1812px;top:362px;width:57px;height:57px;border-radius:14px;background:#a8d0f8"></div><div class="a" style="left:1818px;top:368px;width:45px;height:45px;border-radius:10px;background:#fcd15a;border:1.5px solid #a08440"></div><div class="t" style="top:378.84px;font-size:25px;color:#111;font-weight:normal;left:1821.00px;width:40px;text-align:center;">1</div><div class="in" style="left:1883px;top:368px;width:318px;height:43px;border-color:#bdbdbd"></div><div class="t" style="top:377.68px;font-size:24px;color:#111;font-weight:normal;left:1889px;">Inference-1</div><div class="a" style="left:2215px;top:370px;width:78px;height:41px;border-radius:21px;background:#3a64a8;border:1.5px solid #2f5694"></div><div class="a" style="left:2255px;top:374px;width:33px;height:33px;border-radius:50%;background:#fff"></div><div class="btn" style="left:2307px;top:369px;width:43px;height:42px;background:#e2e2e2;border-color:#bcbcbc"></div><svg class="a" style="left:0;top:0" width="2386" height="1668"><path d="M2317 381 L2340 381 M2325 381 L2325 378 L2332 378 L2332 381" stroke="#555" stroke-width="1.7" fill="none"/><path d="M2319.5 383 L2319.5 403 L2337.5 403 L2337.5 383 M2325.5 386 L2325.5 400 M2331.5 386 L2331.5 400" stroke="#555" stroke-width="1.7" fill="none"/></svg><div class="a" style="left:1790px;top:834px;width:580px;height:8px;background:#c8c8c8"></div><div class="a" style="left:1790px;top:842px;width:580px;height:52px;background:#3a64a8"></div><div class="t" style="top:854.49px;font-size:26px;color:#fff;font-weight:normal;left:1830.00px;width:500px;text-align:center;">Inference Configuration</div><div class="t" style="top:928.26px;font-size:24.5px;color:#222;font-weight:normal;left:1811px;">Type</div><div class="t" style="top:988.26px;font-size:24.5px;color:#222;font-weight:normal;left:1811px;">Mode</div><div class="t" style="top:1049.26px;font-size:24.5px;color:#222;font-weight:normal;left:1811px;">Model</div><div class="t" style="top:1109.26px;font-size:24.5px;color:#222;font-weight:normal;left:1811px;">Prototxt</div><div class="t" style="top:1228.26px;font-size:24.5px;color:#222;font-weight:normal;left:1811px;">LabelFile</div><div class="t" style="top:1288.26px;font-size:24.5px;color:#222;font-weight:normal;left:1811px;">PortNo.</div><div class="t" style="top:1348.26px;font-size:24.5px;color:#222;font-weight:normal;left:1811px;">Optional</div><div class="in" style="left:1952px;top:919px;width:397px;height:46px"></div><div class="t" style="top:928.26px;font-size:24.5px;color:#222;font-weight:normal;left:1959px;">Classification</div><div class="in" style="left:1952px;top:979px;width:397px;height:46px"></div><div class="t" style="top:988.26px;font-size:24.5px;color:#222;font-weight:normal;left:1959px;">CPU</div><svg class="a" style="left:0;top:0" width="2386" height="1668"><path d="M2320 936 L2336 936 L2328 947 Z" fill="#555"/><path d="M2320 996 L2336 996 L2328 1007 Z" fill="#555"/><path d="M1955 1174 L1966 1181.5 L1955 1189 Z" fill="#555"/></svg><div class="in" style="left:1952px;top:1039px;width:341px;height:46px"></div><div class="a" style="left:1958px;top:1041px;width:329px;height:42px;overflow:hidden"><div class="t" style="right:0px;top:8.26px;font-size:24.5px;color:#222">_categorical_accuracy0.87.hdf5</div></div><div class="in" style="left:1952px;top:1099px;width:341px;height:46px"></div><div class="a" style="left:1958px;top:1101px;width:329px;height:42px;overflow:hidden"><div class="t" style="right:0px;top:8.26px;font-size:24.5px;color:#222">t_fashion_mnist_lr001.prototxt</div></div><div class="in" style="left:1952px;top:1219px;width:341px;height:46px"></div><div class="a" style="left:1958px;top:1221px;width:329px;height:42px;overflow:hidden"><div class="t" style="right:0px;top:7.26px;font-size:24.5px;color:#222">t/data/fashion_mnist_labels.txt</div></div><div class="btn" style="left:2308px;top:1040px;width:41px;height:45px"></div><div class="t" style="top:1054.38px;font-size:22px;color:#222;font-weight:bold;left:2308.50px;width:40px;text-align:center;">...</div><div class="btn" style="left:2308px;top:1100px;width:41px;height:45px"></div><div class="t" style="top:1114.38px;font-size:22px;color:#222;font-weight:bold;left:2308.50px;width:40px;text-align:center;">...</div><div class="btn" style="left:2308px;top:1220px;width:41px;height:45px"></div><div class="t" style="top:1234.38px;font-size:22px;color:#222;font-weight:bold;left:2308.50px;width:40px;text-align:center;">...</div><div class="t" style="top:1169.26px;font-size:24.5px;color:#222;font-weight:normal;left:1981px;">Parameters</div><div class="t" style="top:1288.26px;font-size:24.5px;color:#222;font-weight:normal;left:1953px;">Send</div><div class="in" style="left:2034px;top:1279px;width:97px;height:46px"></div><div class="t" style="top:1288.26px;font-size:24.5px;color:#222;font-weight:normal;left:2034.00px;width:97px;text-align:center;">7000</div><div class="t" style="top:1288.26px;font-size:24.5px;color:#222;font-weight:normal;left:2168px;">Recv</div><div class="in" style="left:2251px;top:1279px;width:96px;height:46px"></div><div class="t" style="top:1288.26px;font-size:24.5px;color:#222;font-weight:normal;left:2251.00px;width:96px;text-align:center;">6888</div><div class="cb" style="left:1953px;top:1349px"></div><div class="t" style="top:1348.26px;font-size:24.5px;color:#222;font-weight:normal;left:1987px;">MeanFile</div><div class="in dis" style="left:1952px;top:1399px;width:341px;height:46px"></div><div class="btn" style="left:2308px;top:1400px;width:41px;height:44px"></div><div class="t" style="top:1414.38px;font-size:22px;color:#999;font-weight:normal;left:2308.50px;width:40px;text-align:center;">...</div><div class="cb" style="left:1953px;top:1469px"></div><div class="t" style="top:1468.26px;font-size:24.5px;color:#222;font-weight:normal;left:1987px;">MeanValue</div><div class="in dis" style="left:1952px;top:1519px;width:124px;height:46px"></div><div class="in dis" style="left:2088px;top:1519px;width:123px;height:46px"></div><div class="in dis" style="left:2224px;top:1519px;width:124px;height:46px"></div><div class="a" style="left:2368px;top:334px;width:2px;height:500px;background:#d4d4d4"></div><div class="a" style="left:2368px;top:894px;width:2px;height:706px;background:#d4d4d4"></div><div class="a" style="left:16px;top:1600px;width:2354px;height:52px;background:#3a64a8"></div><div class="t" style="top:1613.35px;font-size:24.4px;color:#fff;font-weight:normal;left:28px;">Work directory: /Users/xulei/Documents/DLP/15_Users/Demo/01_Fashion_Mnist</div><div class="t" style="top:1613.35px;font-size:24.4px;color:#fff;font-weight:normal;left:1957.00px;width:400px;text-align:right;">Framework: Keras</div></body></html>
